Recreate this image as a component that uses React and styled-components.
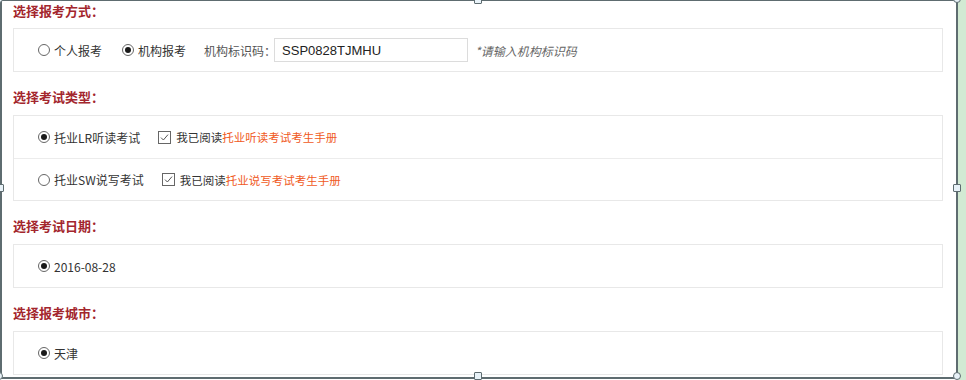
import React from "react";
import styled, { createGlobalStyle } from "styled-components";

const GlobalStyle = createGlobalStyle`
  html, body { margin: 0; padding: 0; background: #ffffff; overflow: hidden; }
  body { font-family: "Noto Sans CJK SC", "Noto Sans", sans-serif; color: #333; }
  * { box-sizing: border-box; }
`;

const Page = styled.div`
  display: flex;
  width: 966px;
  height: 380px;
`;

const Frame = styled.div`
  position: relative;
  width: 958px;
  height: 379px;
  border-style: solid;
  border-color: #5e6c70;
  border-width: 1px 2px 2px 2px;
  padding: 0 13px 0 11px;
  background: #fff;
`;

const Strip = styled.div`
  flex: 1;
  background: #d2ead3;
`;

const Handle = styled.span`
  position: absolute;
  width: 8px;
  height: 8px;
  background: #e8f2f8;
  border: 1px solid #5e6c70;
  border-radius: ${(p) => (p.$round ? "50%" : "1px")};
  left: ${(p) => p.$x}px;
  top: ${(p) => p.$y}px;
`;

const Title = styled.div`
  font-size: 13px;
  font-weight: bold;
  line-height: 20px;
  color: #a3262d;
  margin: ${(p) => (p.$first ? "0 0 7px" : "15px 0 8px")};
`;

const Box = styled.div`
  border: 1px solid #e8e8e8;
  background: #fff;
`;

const Row = styled.div`
  display: flex;
  align-items: center;
  height: 42px;
  padding-left: 24px;
  font-size: 12px;
  & + & { border-top: 1px solid #ececec; }
`;

const Choice = styled.label`
  display: flex;
  align-items: center;
  gap: 4px;
  margin-right: ${(p) => p.$mr || 0}px;
  white-space: nowrap;
  color: #333;
`;

const Radio = styled.span`
  position: relative;
  width: 12px;
  height: 12px;
  border-radius: 50%;
  border: 1px solid #666;
  background: #fff;
  flex: none;
  &::after {
    content: "";
    display: ${(p) => (p.$on ? "block" : "none")};
    position: absolute;
    left: 2px;
    top: 2px;
    width: 6px;
    height: 6px;
    border-radius: 50%;
    background: #1a1a1a;
  }
`;

const Check = styled.span`
  display: flex;
  align-items: center;
  justify-content: center;
  width: 13px;
  height: 13px;
  border: 1px solid #666;
  background: #fff;
  flex: none;
`;

const Label = styled.span`
  color: #555;
  white-space: nowrap;
`;

const Input = styled.div`
  width: 194px;
  height: 24px;
  border: 1px solid #dcdcdc;
  padding-left: 7px;
  display: flex;
  align-items: center;
  font-family: "Liberation Sans", Arial, sans-serif;
  font-size: 13px;
  color: #222;
  margin-left: -2px;
`;

const Hint = styled.span`
  font-style: italic;
  color: #666;
  margin-left: 7px;
  white-space: nowrap;
`;

const Agree = styled.span`
  display: flex;
  align-items: center;
  gap: 5px;
  white-space: nowrap;
  color: #333;
  font-size: 11.5px;
`;

const Link = styled.span`
  color: #f05a24;
`;

const CheckMark = () => (
  <svg width="9" height="9" viewBox="0 0 9 9">
    <path d="M1 4.6 L3.4 7 L8 1.6" fill="none" stroke="#555" strokeWidth="1" />
  </svg>
);

export default function App() {
  return (
    <>
      <GlobalStyle />
      <Page>
        <Frame>
          <Title $first>选择报考方式：</Title>
          <Box>
            <Row>
              <Choice $mr={20}>
                <Radio />
                个人报考
              </Choice>
              <Choice $mr={18}>
                <Radio $on />
                机构报考
              </Choice>
              <Label>机构标识码：</Label>
              <Input>SSP0828TJMHU</Input>
              <Hint>*请输入机构标识码</Hint>
            </Row>
          </Box>

          <Title>选择考试类型：</Title>
          <Box>
            <Row>
              <Choice $mr={18}>
                <Radio $on />
                托业LR听读考试
              </Choice>
              <Agree>
                <Check>
                  <CheckMark />
                </Check>
                <span>
                  我已阅读<Link>托业听读考试考生手册</Link>
                </span>
              </Agree>
            </Row>
            <Row>
              <Choice $mr={18}>
                <Radio />
                托业SW说写考试
              </Choice>
              <Agree>
                <Check>
                  <CheckMark />
                </Check>
                <span>
                  我已阅读<Link>托业说写考试考生手册</Link>
                </span>
              </Agree>
            </Row>
          </Box>

          <Title>选择考试日期：</Title>
          <Box>
            <Row>
              <Choice>
                <Radio $on />
                2016-08-28
              </Choice>
            </Row>
          </Box>

          <Title>选择报考城市：</Title>
          <Box>
            <Row>
              <Choice>
                <Radio $on />
                天津
              </Choice>
            </Row>
          </Box>

          <Handle $x={472} $y={-5} />
          <Handle $x={951} $y={183} />
          <Handle $x={-6} $y={183} />
          <Handle $x={472} $y={371} />
          <Handle $round $x={951} $y={-6} />
          <Handle $round $x={-7} $y={-6} />
          <Handle $round $x={-7} $y={371} />
          <Handle $round $x={951} $y={371} />
        </Frame>
        <Strip />
      </Page>
    </>
  );
}
